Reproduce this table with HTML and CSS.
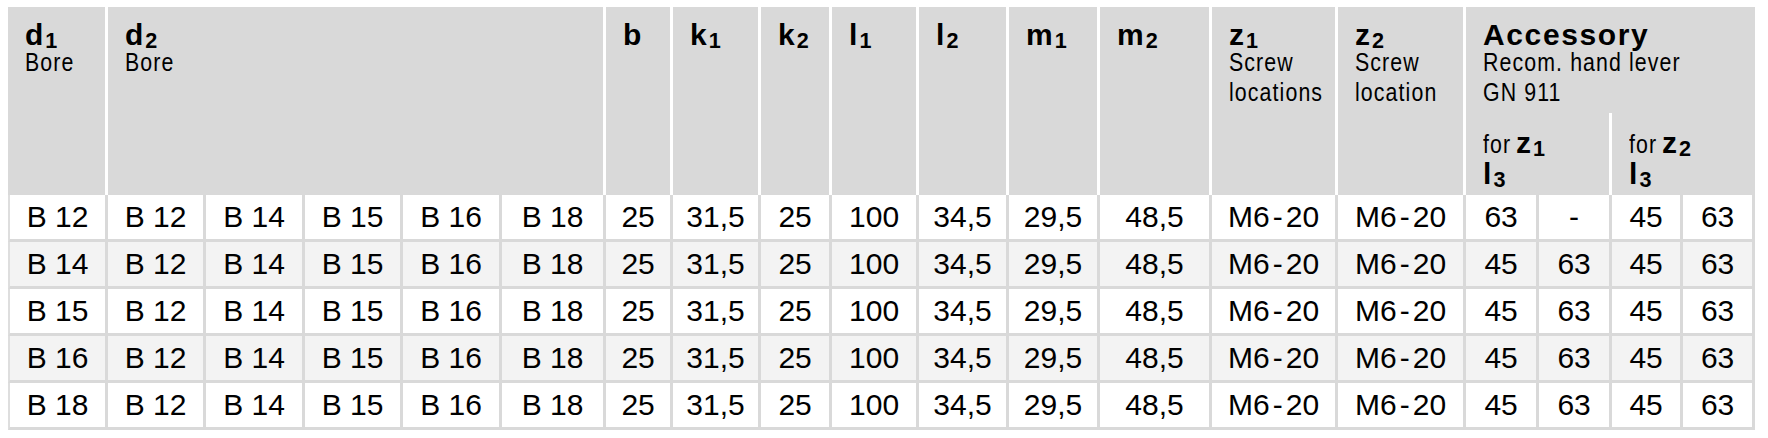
FILE: index.html
```html
<!DOCTYPE html>
<html lang="en">
<head>
<meta charset="utf-8">
<title>GN spec table</title>
<link rel="stylesheet" href="styles.css">
</head>
<body>
<table class="spec">
  <colgroup>
    <col class="w100"><col class="w98"><col class="w99"><col class="w98"><col class="w99"><col class="w104">
    <col class="w67"><col class="w88"><col class="w71"><col class="w87"><col class="w90"><col class="w91">
    <col class="w112"><col class="w126"><col class="w128"><col class="w73"><col class="w73"><col class="w71"><col class="w72">
  </colgroup>
  <thead>
    <tr class="h1">
      <th rowspan="2"><div class="sym">d<sub>1</sub></div><div class="lbl">Bore</div></th>
      <th rowspan="2" colspan="5"><div class="sym">d<sub>2</sub></div><div class="lbl">Bore</div></th>
      <th rowspan="2"><div class="sym">b</div></th>
      <th rowspan="2"><div class="sym">k<sub>1</sub></div></th>
      <th rowspan="2"><div class="sym">k<sub>2</sub></div></th>
      <th rowspan="2"><div class="sym">l<sub>1</sub></div></th>
      <th rowspan="2"><div class="sym">l<sub>2</sub></div></th>
      <th rowspan="2"><div class="sym">m<sub>1</sub></div></th>
      <th rowspan="2"><div class="sym">m<sub>2</sub></div></th>
      <th rowspan="2"><div class="sym">z<sub>1</sub></div><div class="lbl">Screw<br>locations</div></th>
      <th rowspan="2"><div class="sym">z<sub>2</sub></div><div class="lbl">Screw<br>location</div></th>
      <th colspan="4" class="last"><div class="acc">Accessory</div><div class="lbl">Recom. hand lever<br>GN 911</div></th>
    </tr>
    <tr class="h2">
      <th colspan="2" class="subh"><div class="subl"><span class="lbl-in">for</span> <b class="symi">z<sub>1</sub></b></div><div class="subl"><b class="symi">l<sub>3</sub></b></div></th>
      <th colspan="2" class="subh last"><div class="subl"><span class="lbl-in">for</span> <b class="symi">z<sub>2</sub></b></div><div class="subl"><b class="symi">l<sub>3</sub></b></div></th>
    </tr>
  </thead>
  <tbody>
    <tr>
      <td class="first">B 12</td><td>B 12</td><td>B 14</td><td>B 15</td><td>B 16</td><td>B 18</td>
      <td>25</td><td>31,5</td><td>25</td><td>100</td><td>34,5</td><td>29,5</td><td>48,5</td>
      <td>M6<span class="hy">-</span>20</td><td>M6<span class="hy">-</span>20</td><td>63</td><td>-</td><td>45</td><td>63</td>
    </tr>
    <tr>
      <td class="first">B 14</td><td>B 12</td><td>B 14</td><td>B 15</td><td>B 16</td><td>B 18</td>
      <td>25</td><td>31,5</td><td>25</td><td>100</td><td>34,5</td><td>29,5</td><td>48,5</td>
      <td>M6<span class="hy">-</span>20</td><td>M6<span class="hy">-</span>20</td><td>45</td><td>63</td><td>45</td><td>63</td>
    </tr>
    <tr>
      <td class="first">B 15</td><td>B 12</td><td>B 14</td><td>B 15</td><td>B 16</td><td>B 18</td>
      <td>25</td><td>31,5</td><td>25</td><td>100</td><td>34,5</td><td>29,5</td><td>48,5</td>
      <td>M6<span class="hy">-</span>20</td><td>M6<span class="hy">-</span>20</td><td>45</td><td>63</td><td>45</td><td>63</td>
    </tr>
    <tr>
      <td class="first">B 16</td><td>B 12</td><td>B 14</td><td>B 15</td><td>B 16</td><td>B 18</td>
      <td>25</td><td>31,5</td><td>25</td><td>100</td><td>34,5</td><td>29,5</td><td>48,5</td>
      <td>M6<span class="hy">-</span>20</td><td>M6<span class="hy">-</span>20</td><td>45</td><td>63</td><td>45</td><td>63</td>
    </tr>
    <tr>
      <td class="first">B 18</td><td>B 12</td><td>B 14</td><td>B 15</td><td>B 16</td><td>B 18</td>
      <td>25</td><td>31,5</td><td>25</td><td>100</td><td>34,5</td><td>29,5</td><td>48,5</td>
      <td>M6<span class="hy">-</span>20</td><td>M6<span class="hy">-</span>20</td><td>45</td><td>63</td><td>45</td><td>63</td>
    </tr>
  </tbody>
</table>
</body>
</html>
```
FILE: styles.css
```css
html, body {
  margin: 0;
  background: #ffffff;
}
body {
  padding: 7px 0 0 8px;
  font-family: "Liberation Sans", Arial, sans-serif;
  color: #000;
}
.spec {
  border-collapse: separate;
  border-spacing: 0;
  table-layout: fixed;
  width: 1747px;
}
.w100 { width: 100px; }
.w98 { width: 98px; }
.w99 { width: 99px; }
.w104 { width: 104px; }
.w67 { width: 67px; }
.w88 { width: 88px; }
.w71 { width: 71px; }
.w87 { width: 87px; }
.w90 { width: 90px; }
.w91 { width: 91px; }
.w112 { width: 112px; }
.w126 { width: 126px; }
.w128 { width: 128px; }
.w73 { width: 73px; }
.w72 { width: 72px; }

th {
  background: #d9d9d9;
  border-right: 3px solid #ffffff;
  text-align: left;
  vertical-align: top;
  padding: 16px 2px 0 17px;
  font-weight: normal;
  white-space: nowrap;
}
th.last { border-right: 0; }
.h1 { height: 106px; }
.h2 { height: 82px; }

.sym {
  font-family: "Liberation Sans", Arial, sans-serif;
  font-weight: bold;
  font-size: 30px;
  line-height: 24px;
}
.acc {
  font-family: "Liberation Sans", Arial, sans-serif;
  font-weight: bold;
  font-size: 30px;
  line-height: 24px;
  letter-spacing: 1.6px;
}
sub {
  font-size: 0.72em;
  vertical-align: baseline;
  position: relative;
  top: 0.16em;
  line-height: 0;
  margin-left: 2px;
}
.lbl {
  font-family: "Liberation Sans", Arial, sans-serif;
  font-size: 26px;
  line-height: 30px;
  letter-spacing: 1.35px;
  transform: scaleX(0.82);
  transform-origin: 0 0;
}
.subh { padding-top: 14px; }
.subl {
  line-height: 31px;
  height: 31px;
}
.lbl-in {
  display: inline-block;
  font-family: "Liberation Sans", Arial, sans-serif;
  font-size: 26px;
  letter-spacing: 1.35px;
  transform: scaleX(0.82);
  transform-origin: 0 50%;
  margin-right: -6px;
}
.symi {
  font-family: "Liberation Sans", Arial, sans-serif;
  font-weight: bold;
  font-size: 30px;
}

tbody tr { height: 47px; }
td {
  border-right: 3px solid #d9d9d9;
  border-bottom: 3px solid #d9d9d9;
  padding: 0;
  text-align: center;
  vertical-align: middle;
  font-size: 30px;
  line-height: 44px;
  background: #ffffff;
  white-space: nowrap;
}
tbody tr:nth-child(even) td { background: #f3f3f3; }
td.first { border-left: 2px solid #dedede; }
.hy { margin: 0 3px; }
```
